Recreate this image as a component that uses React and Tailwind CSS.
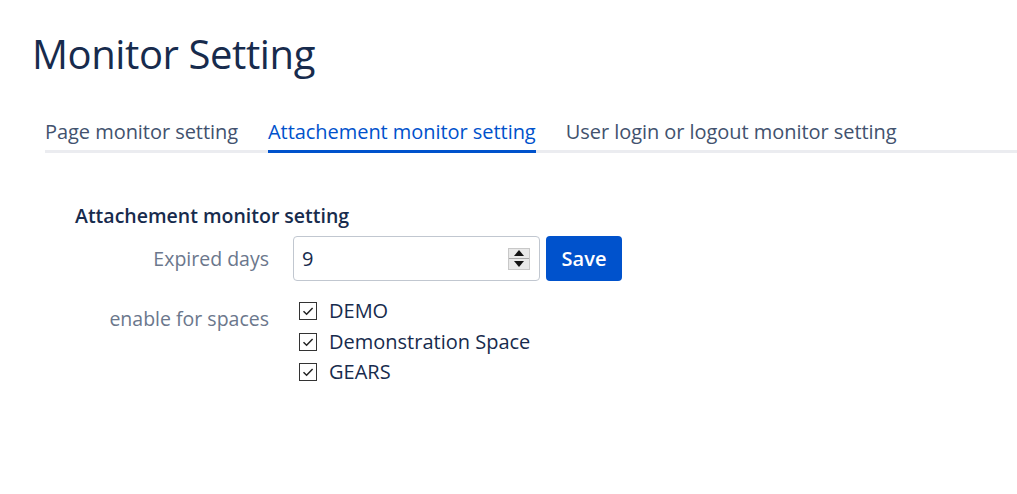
import { useState } from 'react';

const spaces = ['DEMO', 'Demonstration Space', 'GEARS'];

function CheckBox() {
    return (
        <span className="w-[18px] h-[18px] shrink-0 border border-[#333] bg-white flex items-center justify-center">
            <svg width="14" height="14" viewBox="0 0 14 14">
                <path d="M2.5 7.2 L5.6 10.2 L11.6 4" fill="none" stroke="#222" strokeWidth="1.5" />
            </svg>
        </span>
    );
}

export default function App() {
    const [days, setDays] = useState('9');
    const [tab] = useState(1);
    const tabs = ['Page monitor setting', 'Attachement monitor setting', 'User login or logout monitor setting'];

    return (
        <div className="w-[1017px] h-[494px] bg-white pl-[32px] pt-[26px]" style={{ fontFamily: '"Open Sans", "Noto Sans", sans-serif' }}>
            <h1 className="text-[40px] leading-[56px] text-[#172b4d] tracking-[-0.4px]">Monitor Setting</h1>

            <div className="ml-[13px] mt-[36px] flex gap-[30px] border-b-[3px] border-[#ebecf0]">
                {tabs.map((t, i) => (
                    <div
                        key={t}
                        className={
                            'text-[20px] leading-[28px] pb-[4px] -mb-[3px] border-b-[3px] tracking-[-0.05px] ' +
                            (i === tab ? 'text-[#0052cc] border-[#0052cc]' : 'text-[#42526e] border-transparent')
                        }
                    >
                        {t}
                    </div>
                ))}
            </div>

            <div className="ml-[43px] mt-[50px]">
                <h2 className="text-[19.5px] leading-[26px] font-semibold text-[#172b4d]">Attachement monitor setting</h2>
                <div className="grid grid-cols-[194px_auto] gap-x-[24px] mt-[7px]">
                    <div className="text-[19.5px] text-[#6b778c] text-right leading-[45px]">Expired days</div>
                    <div className="flex gap-[6px]">
                        <div className="w-[247px] h-[45px] border border-[#c1c7d0] rounded-[4px] flex items-center pl-[8px] pr-[9px]">
                            <input
                                value={days}
                                onChange={(e) => setDays(e.target.value)}
                                className="flex-1 min-w-0 w-0 text-[20px] text-[#172b4d] outline-none bg-transparent"
                            />
                            <div className="w-[22px] h-[22px] shrink-0 bg-[#e8e8e8] border border-[#c8c8c8] flex flex-col">
                                <div className="flex-1 flex items-center justify-center border-b border-[#a8a8a8]">
                                    <svg width="10" height="6" viewBox="0 0 10 6"><path d="M0 6 L5 0 L10 6 Z" fill="#111" /></svg>
                                </div>
                                <div className="flex-1 flex items-center justify-center">
                                    <svg width="10" height="6" viewBox="0 0 10 6"><path d="M0 0 L10 0 L5 6 Z" fill="#111" /></svg>
                                </div>
                            </div>
                        </div>
                        <button className="w-[76px] h-[45px] bg-[#0052cc] text-white rounded-[4px] text-[20px] font-semibold">Save</button>
                    </div>

                    <div className="text-[19.5px] text-[#6b778c] text-right mt-[24px] leading-[28px]">enable for spaces</div>
                    <div className="mt-[15px] pl-[6px] flex flex-col">
                        {spaces.map((s) => (
                            <label key={s} className="flex items-center gap-[12px] h-[30.5px]">
                                <CheckBox />
                                <span className="text-[20px] text-[#172b4d]">{s}</span>
                            </label>
                        ))}
                    </div>
                </div>
            </div>
        </div>
    );
}
